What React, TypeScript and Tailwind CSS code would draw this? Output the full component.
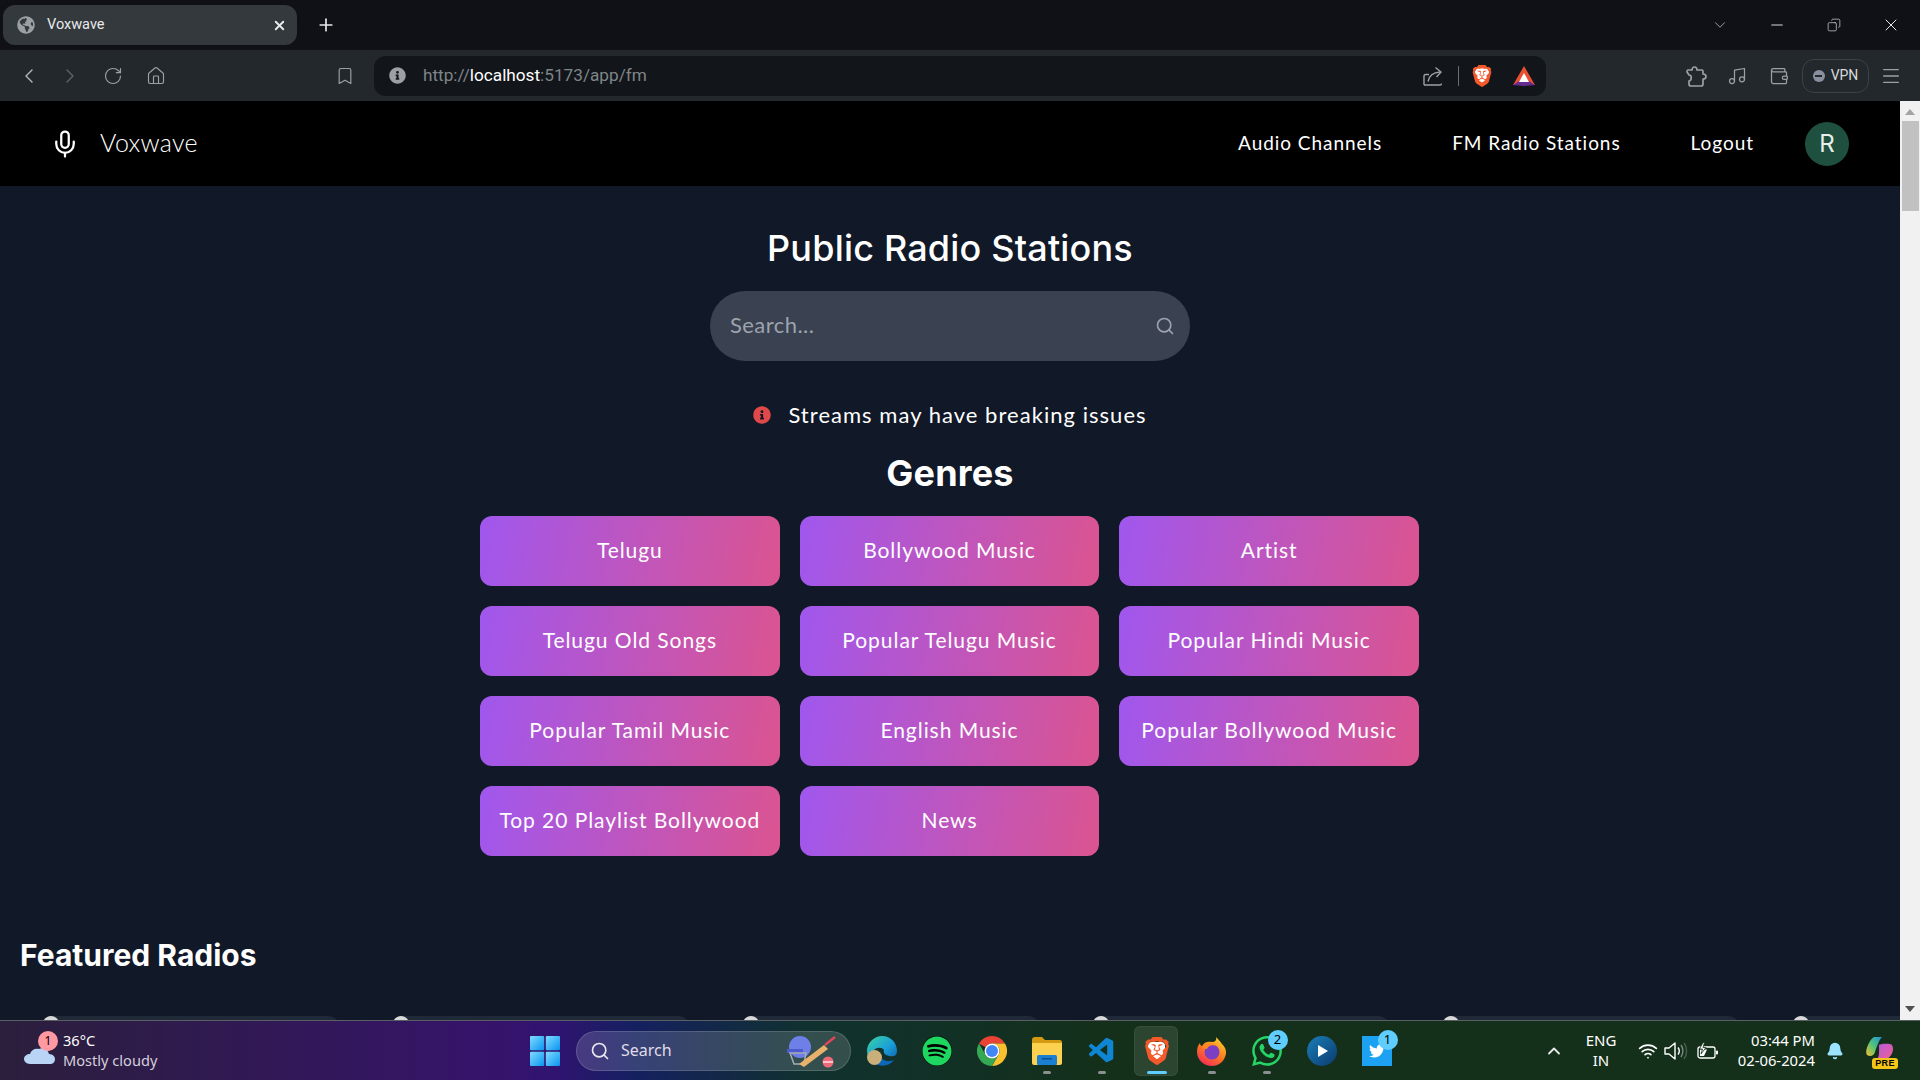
import {
  Bell,
  Bookmark,
  ChevronDown,
  ChevronLeft,
  ChevronRight,
  ChevronUp,
  Copy,
  Home,
  Menu,
  Mic,
  Minus,
  Music,
  Plus,
  RotateCw,
  Search,
  Wallet,
  Wifi,
  X,
} from "lucide-react";
import { FaSpotify, FaTwitter, FaGlobeAmericas, FaInfoCircle } from "react-icons/fa";
import { SiBrave, SiWhatsapp } from "react-icons/si";
import { VscVscode } from "react-icons/vsc";

const genres = [
  "Telugu",
  "Bollywood Music",
  "Artist",
  "Telugu Old Songs",
  "Popular Telugu Music",
  "Popular Hindi Music",
  "Popular Tamil Music",
  "English Music",
  "Popular Bollywood Music",
  "Top 20 Playlist Bollywood",
  "News",
];

function BraveIcon({ size }: { size: number }) {
  return (
    <div className="relative flex items-center justify-center" style={{ width: size, height: size }}>
      <div className="absolute inset-[18%] rounded-sm bg-white" />
      <SiBrave size={size} color="#f4592a" className="relative" />
    </div>
  );
}

function BatIcon() {
  return (
    <svg width="24" height="22" viewBox="0 0 24 22">
      <path d="M12 1 L23 20 H17 L12 11 Z" fill="#e8502f" />
      <path d="M12 1 L1 20 H7 L12 11 Z" fill="#e8502f" />
      <path d="M1 20 L12 21 L23 20 L17 16 H7 Z" fill="#662d91" />
      <path d="M12 8 L17 17 H7 Z" fill="#fff" />
    </svg>
  );
}

function ShareArrow() {
  return (
    <svg width="20" height="20" viewBox="0 0 20 20" fill="none" stroke="currentColor" strokeWidth="1.4">
      <path d="M1 19 V10 C1 9 1.7 8.5 2.5 8.5 H6" />
      <path d="M1 19 H17 C18 19 18.5 18.5 18.5 17.5" />
      <path d="M5 15.5 C6 10 10 6.5 17 6" />
      <path d="M12.5 1.5 L18 6 L13.5 11" />
    </svg>
  );
}

function PuzzleIcon() {
  return (
    <svg width="22" height="24" viewBox="0 0 22 24" fill="none" stroke="currentColor" strokeWidth="1.7" strokeLinejoin="round">
      <path d="M3 6 H7 C7 2 12 2 12 6 H17 C18 6 18 7 18 8 V10 C22 10 22 15 18 15 V20 C18 21 17 22 16 22 H6 C5 22 4 21 4 20 V17 C7 16 7 11 4 11 L2 8 C2 7 2 6 3 6 Z" />
    </svg>
  );
}

function SpeakerIcon() {
  return (
    <svg width="26" height="20" viewBox="0 0 26 20" fill="none" strokeWidth="1.4">
      <path d="M1 7 H5 L11 2 V18 L5 13 H1 Z" stroke="#ffffff" strokeLinejoin="round" />
      <path d="M14 6.5 C15.5 8.5 15.5 11.5 14 13.5" stroke="#ffffff" />
      <path d="M17 4 C19.5 7.5 19.5 12.5 17 16" stroke="#7b8a80" />
      <path d="M20 2 C23.5 6.5 23.5 13.5 20 18" stroke="#4c5c50" />
    </svg>
  );
}

function BatteryIcon() {
  return (
    <svg width="22" height="18" viewBox="0 0 22 18" fill="none">
      <rect x="1" y="5" width="17" height="11" rx="2" stroke="#ffffff" strokeWidth="1.3" />
      <rect x="19" y="8.5" width="2" height="4" rx="0.8" fill="#ffffff" />
      <path d="M3 14 V7.5 H10 L7 14 Z" fill="#ffffff" />
      <path d="M6 0.5 L2.5 7 H5.5 L4 12 L9 5.5 H6 L7.5 0.5 Z" fill="#ffffff" stroke="#14301a" strokeWidth="0.8" />
    </svg>
  );
}

function WindowsLogo() {
  return (
    <svg width="30" height="30" viewBox="0 0 30 30">
      <defs>
        <linearGradient id="win" x1="0" y1="0" x2="1" y2="1">
          <stop offset="0" stopColor="#7fdcff" />
          <stop offset="1" stopColor="#0a94f0" />
        </linearGradient>
      </defs>
      <rect x="0" y="0" width="14.2" height="14.2" rx="1" fill="url(#win)" />
      <rect x="15.8" y="0" width="14.2" height="14.2" rx="1" fill="url(#win)" />
      <rect x="0" y="15.8" width="14.2" height="14.2" rx="1" fill="url(#win)" />
      <rect x="15.8" y="15.8" width="14.2" height="14.2" rx="1" fill="url(#win)" />
    </svg>
  );
}

function CricketDoodle() {
  return (
    <svg width="50" height="34" viewBox="0 0 50 34">
      <circle cx="14" cy="13" r="11" fill="#6f7fe8" />
      <path d="M1 15 H17 V19 H1 Z" fill="#4d5bd0" />
      <path d="M4 19 H20 L18 30 H8 Z" fill="none" stroke="#a8adb5" strokeWidth="1.5" />
      <path d="M13 30 L38 11 L42 15 L18 33 Z" fill="#e8b26c" />
      <path d="M39 11 L49 3" stroke="#e0455a" strokeWidth="2.5" />
      <circle cx="42" cy="28" r="5.5" fill="#ee6a78" />
      <path d="M37 28 H47" stroke="#fff" strokeWidth="1.2" />
    </svg>
  );
}

function EdgeIcon() {
  return (
    <div className="relative h-[30px] w-[30px]">
      <svg width="30" height="30" viewBox="0 0 30 30">
        <defs>
          <linearGradient id="edge" x1="0" y1="0" x2="1" y2="1">
            <stop offset="0" stopColor="#3bd4a0" />
            <stop offset="0.55" stopColor="#1a9fd8" />
            <stop offset="1" stopColor="#0c59a4" />
          </linearGradient>
        </defs>
        <path d="M15 0 C24 0 30 7 30 15 C30 20 26 21 22 20 C18 19 16 17 17 14 C15 11 10 11 7 14 C4 17 4 23 8 27 C3 24 0 20 0 15 C0 7 7 0 15 0 Z" fill="url(#edge)" />
        <path d="M8 27 C13 31 22 31 27 24 C22 26 15 25 13 20 C11 22 9 25 8 27 Z" fill="#0d66b8" />
      </svg>
      <div className="absolute bottom-[1px] left-0 h-[15px] w-[15px] rounded-full bg-[#c9b07a]" />
    </div>
  );
}

function ChromeIcon() {
  return (
    <svg width="30" height="30" viewBox="0 0 30 30">
      <path d="M15 0 A15 15 0 0 1 28 7.5 H15 A7.5 7.5 0 0 0 8.5 11.2 L2 7.5 A15 15 0 0 1 15 0 Z" fill="#ea4335" />
      <path d="M28 7.5 A15 15 0 0 1 15 30 L21.5 18.8 A7.5 7.5 0 0 0 21.5 11.2 L15 7.5 Z" fill="#fbc02d" />
      <path d="M2 7.5 L8.5 18.8 A7.5 7.5 0 0 0 21.5 18.8 L15 30 A15 15 0 0 1 2 7.5 Z" fill="#34a853" />
      <circle cx="15" cy="15" r="7.5" fill="#fff" />
      <circle cx="15" cy="15" r="6" fill="#4285f4" />
    </svg>
  );
}

function FolderIcon() {
  return (
    <svg width="30" height="28" viewBox="0 0 30 28">
      <path d="M0 3 C0 1 1 0 3 0 H10 L13 3 H28 C29 3 30 4 30 5 V9 H0 Z" fill="#d49a12" />
      <path d="M0 6 H30 V26 C30 27 29 28 28 28 H2 C1 28 0 27 0 26 Z" fill="#fcd14f" />
      <rect x="5" y="18" width="20" height="10" rx="1.5" fill="#1a7fd0" />
      <rect x="10" y="21" width="10" height="1.5" fill="#0d4f8c" />
    </svg>
  );
}

function FirefoxIcon() {
  return (
    <svg width="30" height="30" viewBox="0 0 30 30">
      <defs>
        <linearGradient id="ffx" x1="0.8" y1="0" x2="0.2" y2="1">
          <stop offset="0" stopColor="#ffd02e" />
          <stop offset="0.5" stopColor="#ff7a1f" />
          <stop offset="1" stopColor="#f0265c" />
        </linearGradient>
      </defs>
      <path d="M19 1 C21 3 23 5 25 8 C29 12 30 16 28 21 C26 27 20 30 15 30 C7 30 0 24 0 16 C0 12 1 9 3 7 C3 9 4 10 5 10 C7 6 11 5 15 6 C18 6 20 4 19 1 Z" fill="url(#ffx)" />
      <circle cx="15" cy="16" r="7.5" fill="#7b3fc4" />
      <path d="M5 12 C8 6 15 6 19 10 C15 8 11 10 10 13 Z" fill="#ff8a1f" />
    </svg>
  );
}

function CopilotIcon() {
  return (
    <div className="relative h-[30px] w-[30px]">
      <svg width="30" height="26" viewBox="0 0 30 26">
        <defs>
          <linearGradient id="cpa" x1="0" y1="1" x2="1" y2="0">
            <stop offset="0" stopColor="#f5c02e" />
            <stop offset="0.5" stopColor="#4fc47a" />
            <stop offset="1" stopColor="#1f8fe0" />
          </linearGradient>
          <linearGradient id="cpb" x1="0" y1="0" x2="1" y2="1">
            <stop offset="0" stopColor="#b55ae0" />
            <stop offset="1" stopColor="#f06090" />
          </linearGradient>
        </defs>
        <path d="M9 1 H17 C14 4 12 10 10 16 C9 20 5 21 2 19 C-1 15 5 3 9 1 Z" fill="url(#cpa)" />
        <path d="M14 9 C16 8 24 7 27 9 C30 14 26 22 20 24 H11 C15 22 14 14 14 9 Z" fill="url(#cpb)" />
      </svg>
      <div className="absolute bottom-[-3px] right-[-3px] rounded-[3px] bg-[#f5c518] px-[3px] font-['Liberation_Sans',sans-serif] text-[9px] leading-[11px] font-bold tracking-wider text-black">
        PRE
      </div>
    </div>
  );
}

function WeatherIcon() {
  return (
    <div className="relative h-[34px] w-[32px]">
      <svg width="32" height="34" viewBox="0 0 32 34" className="absolute top-0 left-0">
        <circle cx="23" cy="11" r="6" fill="#e8891c" />
        <path d="M6 30 C2 30 0 27 0 25 C0 22 3 20 6 20 C7 16 11 14 15 15 C18 13 24 15 25 20 C29 20 31 23 31 25 C31 28 29 30 26 30 Z" fill="#b9d4f5" />
      </svg>
      <div className="absolute top-[-3px] left-[14px] flex h-5 w-5 items-center justify-center rounded-full bg-[#ff9aa2] text-[12px] text-black">
        1
      </div>
    </div>
  );
}

function CountBadge({ value }: { value: number }) {
  return (
    <div className="absolute top-[-6px] right-[-6px] flex h-5 w-5 items-center justify-center rounded-full bg-[#60cdff] text-[13px] text-black">
      {value}
    </div>
  );
}

function RunDot({ active }: { active?: boolean }) {
  return (
    <div
      className={
        active
          ? "absolute bottom-[2px] left-1/2 h-[3px] w-5 -translate-x-1/2 rounded-full bg-[#60cdff]"
          : "absolute bottom-[2px] left-1/2 h-[3px] w-2 -translate-x-1/2 rounded-full bg-[#8b8f8f]"
      }
    />
  );
}

function TaskSlot({ children, dot }: { children: React.ReactNode; dot?: boolean }) {
  return (
    <div className="relative flex h-[50px] w-[55px] items-center justify-center">
      {children}
      {dot && <RunDot />}
    </div>
  );
}

export default function App() {
  return (
    <div className="flex h-screen flex-col overflow-hidden bg-[#111827] font-['Lato',sans-serif] text-white">
      {/* Browser tab strip */}
      <div className="flex h-[50px] shrink-0 items-center bg-[#0f1117] pl-[3px] font-['Noto_Sans',sans-serif]">
        <div className="flex h-10 w-[294px] items-center rounded-xl bg-[#33393d] pr-[10px] pl-[14px]">
          <FaGlobeAmericas size={18} className="text-[#9aa0a4]" />
          <span className="ml-[12px] flex-1 font-['Roboto',sans-serif] text-[14.5px] text-[#e8eaeb]">Voxwave</span>
          <X size={15} strokeWidth={3} className="text-[#e8eaeb]" />
        </div>
        <Plus size={20} className="ml-[19px] text-[#e8eaeb]" />
        <div className="flex-1" />
        <ChevronDown size={18} strokeWidth={1} className="text-[#c9cbcd]" />
        <Minus size={18} strokeWidth={1.5} className="ml-[39px] text-[#d8dadc]" />
        <Copy size={14} strokeWidth={1.2} className="ml-[41px] -scale-x-100 text-[#d8dadc]" />
        <X size={20} strokeWidth={1.2} className="mr-[19px] ml-[40px] text-[#e8eaeb]" />
      </div>

      {/* Browser toolbar */}
      <div className="flex h-[51px] shrink-0 items-center bg-[#22282c] text-[#9aa0a4]">
        <ChevronLeft size={24} strokeWidth={1.4} className="ml-[17px] text-[#b4b8bb]" />
        <ChevronRight size={24} strokeWidth={1.4} className="ml-[17px] text-[#5e6467]" />
        <RotateCw size={20} strokeWidth={1.4} className="ml-[21px]" />
        <Home size={20} strokeWidth={1.4} className="ml-[23px]" />
        <Bookmark size={20} strokeWidth={1.4} className="ml-[169px]" />
        <div className="ml-[19px] flex h-10 w-[1172px] items-center rounded-xl bg-[#12151a] pr-[10px] pl-[15px]">
          <FaInfoCircle size={17} className="text-[#9aa0a4]" />
          <div className="ml-[17px] flex-1 font-['Roboto',sans-serif] text-[17.2px] text-[#7f8589]">
            http://<span className="text-white">localhost</span>:5173/app/fm
          </div>
          <div className="mr-[15px]">
            <ShareArrow />
          </div>
          <div className="h-5 w-px bg-[#6a6f72]" />
          <div className="ml-[12px]">
            <BraveIcon size={22} />
          </div>
          <div className="ml-[19px]">
            <BatIcon />
          </div>
        </div>
        <div className="ml-[139px]">
          <PuzzleIcon />
        </div>
        <Music size={20} strokeWidth={1.5} className="ml-[20px]" />
        <Wallet size={20} strokeWidth={1.5} className="ml-[22px]" />
        <div className="ml-[13px] flex h-[34px] w-[67px] items-center justify-center gap-[6px] rounded-xl border border-[#3c4246] font-['Roboto',sans-serif] text-[14px] text-[#d8dadc]">
          <div className="flex h-[12px] w-[12px] items-center justify-center rounded-full bg-[#8a8fa0]">
            <div className="h-[2px] w-[7px] bg-[#22282c]" />
          </div>
          VPN
        </div>
        <Menu size={22} strokeWidth={1.4} className="ml-[11px]" />
      </div>

      {/* Page area with its scrollbar */}
      <div className="flex min-h-0 flex-1">
        <div className="min-w-0 flex-1 overflow-hidden">
          <nav className="flex h-[85px] items-center bg-black pr-[51px] pl-[50px]">
            <Mic size={30} strokeWidth={1.8} />
            <span className="ml-[20px] pb-[2px] text-[25px] font-light tracking-[0.01em]">Voxwave</span>
            <div className="flex-1" />
            <span className="text-[19px] tracking-[0.05em]">Audio Channels</span>
            <span className="ml-[70px] text-[19px] tracking-[0.05em]">FM Radio Stations</span>
            <span className="ml-[70px] text-[19px] tracking-[0.05em]">Logout</span>
            <div className="ml-[51px] flex h-11 w-11 items-center justify-center rounded-full bg-[#1f4f3f] font-['Inter',sans-serif] text-[24px] text-[#e8efe9]">
              R
            </div>
          </nav>

          <main className="flex flex-col items-center pt-[42px]">
            <h1 className="font-['Inter',sans-serif] text-4xl font-medium tracking-[0.005em]">Public Radio Stations</h1>
            <div className="mt-[23px] flex h-[70px] w-[480px] items-center rounded-full bg-[#3a4150] pr-[15px] pl-[20px]">
              <span className="flex-1 pb-[3px] text-[22px] tracking-[0.02em] text-[#9ca3af]">Search...</span>
              <Search size={20} className="text-[#9ca3af]" />
            </div>
            <div className="mt-[40px] flex items-center">
              <FaInfoCircle size={18} className="text-[#e0494a]" />
              <span className="ml-[17px] text-[22px] leading-7 tracking-[0.047em]">Streams may have breaking issues</span>
            </div>
            <h2 className="mt-[24px] font-['Inter',sans-serif] text-4xl font-bold tracking-[0.005em]">Genres</h2>
            <div className="mt-[23px] ml-[480px] grid w-[939px] grid-cols-3 gap-5 self-start">
              {genres.map((genre) => (
                <button
                  key={genre}
                  className="flex h-[70px] items-center justify-center rounded-xl bg-[linear-gradient(100deg,#a057ee,#db5490)] pb-[2px] text-[21px] tracking-[0.045em]"
                >
                  {genre}
                </button>
              ))}
            </div>
            <section className="mt-[81px] w-full">
              <h2 className="pl-5 font-['Inter',sans-serif] text-3xl font-bold">Featured Radios</h2>
              <div className="mt-[43px] flex gap-[50px] pl-10">
                {[0, 1, 2, 3, 4, 5].map((card) => (
                  <div key={card} className="relative h-[100px] w-[300px] shrink-0 rounded-xl bg-[#1f2937]">
                    <div className="absolute top-0 left-[3px] h-4 w-4 rounded-full bg-[#d9d9d9]" />
                  </div>
                ))}
              </div>
            </section>
          </main>
        </div>

        {/* Scrollbar */}
        <div className="flex w-5 shrink-0 flex-col items-center bg-[#f1f1f1]">
          <div className="mt-[8px] h-0 w-0 border-x-[5px] border-b-[6px] border-x-transparent border-b-[#a3a3a3]" />
          <div className="mt-[6px] h-[90px] w-[17px] bg-[#c1c1c1]" />
          <div className="flex-1" />
          <div className="mb-[8px] h-0 w-0 border-x-[5px] border-t-[6px] border-x-transparent border-t-[#505050]" />
        </div>
      </div>

      {/* Windows taskbar */}
      <footer className="flex h-[60px] shrink-0 items-center border-t border-[#5a5f66] bg-[linear-gradient(90deg,#2b1f3c_0%,#36136b_26%,#2f1470_29%,#152060_33%,#10312f_42%,#14301a_58%,#14301a_100%)] font-['Noto_Sans',sans-serif]">
        <div className="ml-[24px]">
          <WeatherIcon />
        </div>
        <div className="ml-[7px] w-[100px] pb-[2px] text-[14.6px] leading-[20px]">
          <div>36°C</div>
          <div className="text-[#d5d0dc]">Mostly cloudy</div>
        </div>
        <div className="ml-[367px]">
          <WindowsLogo />
        </div>
        <div className="ml-[16px] flex h-10 w-[275px] items-center rounded-full border border-white/15 bg-white/15 pr-[14px] pl-[13px]">
          <Search size={20} className="text-[#e8e6ee]" />
          <span className="ml-[11px] flex-1 pb-[1px] text-[16px] text-[#e0dce8]">Search</span>
          <CricketDoodle />
        </div>
        <div className="ml-[3px] flex items-center">
          <TaskSlot>
            <EdgeIcon />
          </TaskSlot>
          <TaskSlot>
            <div className="rounded-full bg-black">
              <FaSpotify size={30} color="#1ed760" />
            </div>
          </TaskSlot>
          <TaskSlot>
            <ChromeIcon />
          </TaskSlot>
          <TaskSlot dot>
            <FolderIcon />
          </TaskSlot>
          <TaskSlot dot>
            <VscVscode size={30} color="#0f86d4" />
          </TaskSlot>
          <TaskSlot>
            <div className="absolute inset-y-0 left-[5px] w-[44px] rounded-md border border-white/5 bg-white/10" />
            <div className="relative">
              <BraveIcon size={28} />
            </div>
            <RunDot active />
          </TaskSlot>
          <TaskSlot dot>
            <FirefoxIcon />
          </TaskSlot>
          <TaskSlot dot>
            <div className="relative">
              <SiWhatsapp size={30} color="#25d366" />
              <CountBadge value={2} />
            </div>
          </TaskSlot>
          <TaskSlot>
            <div className="flex h-[30px] w-[30px] items-center justify-center rounded-full bg-[linear-gradient(135deg,#1a7fb8,#0b3a6e)]">
              <div className="ml-[2px] h-0 w-0 border-y-[6px] border-l-[10px] border-y-transparent border-l-white" />
            </div>
          </TaskSlot>
          <TaskSlot>
            <div className="relative flex h-[30px] w-[30px] items-center justify-center bg-[#1da1f2]">
              <FaTwitter size={16} color="#fff" />
              <CountBadge value={1} />
            </div>
          </TaskSlot>
        </div>
        <div className="flex-1" />
        <ChevronUp size={20} strokeWidth={2.2} className="text-[#e8e8e8]" />
        <div className="ml-[20px] w-[34px] pb-[2px] text-center text-[15px] leading-[20px]">
          <div>ENG</div>
          <div>IN</div>
        </div>
        <Wifi size={20} strokeWidth={2} className="ml-[20px]" />
        <div className="ml-[6px]">
          <SpeakerIcon />
        </div>
        <div className="ml-[7px]">
          <BatteryIcon />
        </div>
        <div className="ml-[10px] w-[86px] pb-[2px] text-right text-[14.8px] leading-[20px]">
          <div>03:44 PM</div>
          <div>02-06-2024</div>
        </div>
        <Bell size={18} fill="#9be3ff" color="#9be3ff" className="ml-[11px]" />
        <div className="mr-[25px] ml-[21px]">
          <CopilotIcon />
        </div>
      </footer>
    </div>
  );
}
